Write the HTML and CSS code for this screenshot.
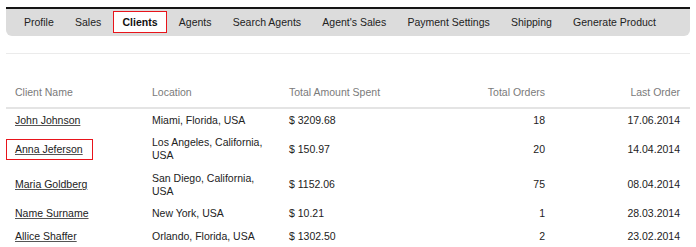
FILE: index.html
```html
<!DOCTYPE html>
<html>
<head>
<meta charset="utf-8">
<link rel="stylesheet" href="styles.css">
</head>
<body>
<div class="page">
  <nav class="nav">
    <a class="tab">Profile</a>
    <a class="tab">Sales</a>
    <a class="tab active">Clients</a>
    <a class="tab">Agents</a>
    <a class="tab">Search Agents</a>
    <a class="tab">Agent's Sales</a>
    <a class="tab">Payment Settings</a>
    <a class="tab">Shipping</a>
    <a class="tab">Generate Product</a>
  </nav>
  <div class="divider"></div>
  <table class="clients">
    <colgroup>
      <col class="c1"><col class="c2"><col class="c3"><col class="c4"><col class="c5">
    </colgroup>
    <thead>
      <tr>
        <th>Client Name</th>
        <th>Location</th>
        <th>Total Amount Spent</th>
        <th class="num">Total Orders</th>
        <th class="num">Last Order</th>
      </tr>
    </thead>
    <tbody>
      <tr>
        <td><a href="#">John Johnson</a></td>
        <td>Miami, Florida, USA</td>
        <td>$ 3209.68</td>
        <td class="num">18</td>
        <td class="num">17.06.2014</td>
      </tr>
      <tr>
        <td><span class="mark"><a href="#">Anna Jeferson</a></span></td>
        <td>Los Angeles, California, USA</td>
        <td>$ 150.97</td>
        <td class="num">20</td>
        <td class="num">14.04.2014</td>
      </tr>
      <tr>
        <td><a href="#">Maria Goldberg</a></td>
        <td>San Diego, California, USA</td>
        <td>$ 1152.06</td>
        <td class="num">75</td>
        <td class="num">08.04.2014</td>
      </tr>
      <tr>
        <td><a href="#">Name Surname</a></td>
        <td>New York, USA</td>
        <td>$ 10.21</td>
        <td class="num">1</td>
        <td class="num">28.03.2014</td>
      </tr>
      <tr>
        <td><a href="#">Allice Shaffer</a></td>
        <td>Orlando, Florida, USA</td>
        <td>$ 1302.50</td>
        <td class="num">2</td>
        <td class="num">23.02.2014</td>
      </tr>
    </tbody>
  </table>
</div>
</body>
</html>
```
FILE: styles.css
```css
html, body {
  margin: 0;
  padding: 0;
  background: #ffffff;
}

body {
  font-family: "Liberation Sans", Arial, Helvetica, sans-serif;
  font-size: 10.5px;
  color: #222222;
}

.page {
  padding: 7px 6px 0 6px;
}

.nav {
  display: flex;
  gap: 2.25px;
  border-top: 2px solid #151515;
  background: #dcdcdc;
  border-radius: 0 0 6px 6px;
  padding: 2px 8.5px 3px;
}

.tab {
  display: block;
  padding: 0 8.5px;
  line-height: 20px;
  border: 1px solid transparent;
  color: #222222;
  white-space: nowrap;
}

.tab.active {
  background: #ffffff;
  border-color: #e8141b;
  font-weight: bold;
  color: #111111;
}

.divider {
  margin-top: 17px;
  border-top: 1px solid #ebebeb;
}

.clients {
  margin-top: 28px;
  width: 100%;
  border-collapse: collapse;
  table-layout: fixed;
}

.c1 { width: 137px; }
.c2 { width: 137px; }
.c3 { width: 140px; }
.c4 { width: 135px; }
.c5 { width: 135px; }

.clients th {
  font-weight: normal;
  color: #7a7a7a;
  text-align: left;
  line-height: 13px;
  padding: 3.5px 9px 8.5px;
  border-bottom: 2px solid #e4e4e4;
}

.clients td {
  line-height: 13px;
  padding: 4.75px 9px;
  vertical-align: middle;
  color: #222222;
}

.clients .num {
  text-align: right;
  padding-right: 10px;
}

.clients a {
  color: #222222;
  text-decoration: underline;
  text-decoration-color: #555555;
}

.mark {
  display: inline-block;
  border: 1px solid #e8141b;
  padding: 3px 9px 3px 8px;
  margin: 0 -9px;
}
```
